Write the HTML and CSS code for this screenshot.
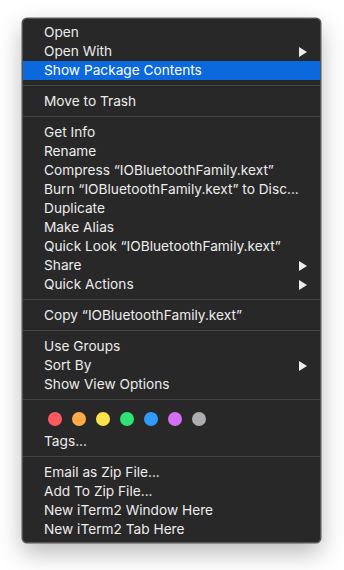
FILE: index.html
```html
<!DOCTYPE html>
<html lang="en">
<head>
    <meta charset="UTF-8">
    <meta name="viewport" content="width=device-width, initial-scale=1.0">
    <title>Context Menu</title>
    <link rel="stylesheet" href="styles.css">
</head>
<body>
    <div class="menu">
        <div class="item">Open</div>
        <div class="item has-sub">Open With</div>
        <div class="item active">Show Package Contents</div>
        <div class="sep"></div>

        <div class="item">Move to Trash</div>
        <div class="sep"></div>

        <div class="item">Get Info</div>
        <div class="item">Rename</div>
        <div class="item">Compress “IOBluetoothFamily.kext”</div>
        <div class="item">Burn “IOBluetoothFamily.kext” to Disc...</div>
        <div class="item">Duplicate</div>
        <div class="item">Make Alias</div>
        <div class="item">Quick Look “IOBluetoothFamily.kext”</div>
        <div class="item has-sub">Share</div>
        <div class="item has-sub">Quick Actions</div>
        <div class="sep"></div>

        <div class="item">Copy “IOBluetoothFamily.kext”</div>
        <div class="sep"></div>

        <div class="item">Use Groups</div>
        <div class="item has-sub">Sort By</div>
        <div class="item">Show View Options</div>
        <div class="sep"></div>

        <div class="tags">
            <span class="dot red"></span>
            <span class="dot orange"></span>
            <span class="dot yellow"></span>
            <span class="dot green"></span>
            <span class="dot blue"></span>
            <span class="dot purple"></span>
            <span class="dot grey"></span>
        </div>
        <div class="item">Tags...</div>
        <div class="sep"></div>

        <div class="item">Email as Zip File...</div>
        <div class="item">Add To Zip File...</div>
        <div class="item">New iTerm2 Window Here</div>
        <div class="item">New iTerm2 Tab Here</div>
    </div>
</body>
</html>
```

FILE: styles.css
```css
html {
    background-color: #fff;
}

body {
    margin: 0;
    min-height: 100vh;
    padding: 18px 0 0 22px;
    box-sizing: border-box;
    font-family: Inter, "Noto Sans", sans-serif;
}

.menu {
    width: 297px;
    padding: 4px 0 3px;
    background-color: #282828;
    border: 1px solid #555;
    border-radius: 5px;
    box-shadow: 0 0 0 0.5px rgba(0,0,0,0.6), 0 10px 24px rgba(0,0,0,0.28);
}

.item {
    height: 19px;
    line-height: 19px;
    padding: 0 13px 0 21px;
    font-size: 13.7px;
    color: #ececec;
    white-space: nowrap;
    display: flex;
    justify-content: space-between;
    align-items: center;
}

.item.active {
    background-color: #0b68dd;
    color: #fff;
}

.has-sub::after {
    content: "";
    width: 0;
    height: 0;
    border-top: 5px solid transparent;
    border-bottom: 5px solid transparent;
    border-left: 8px solid #ececec;
}

.sep {
    height: 1px;
    margin: 5px 0 6px;
    background-color: #444;
}

.tags {
    height: 26px;
    padding-left: 25px;
    display: flex;
    align-items: center;
    gap: 10px;
}

.dot {
    width: 14px;
    height: 14px;
    border-radius: 50%;
}

.red { background-color: #fc5a60; }
.orange { background-color: #fdaa47; }
.yellow { background-color: #fde34a; }
.green { background-color: #2fe274; }
.blue { background-color: #2e9bfd; }
.purple { background-color: #d26ff2; }
.grey { background-color: #adadb1; }
```
